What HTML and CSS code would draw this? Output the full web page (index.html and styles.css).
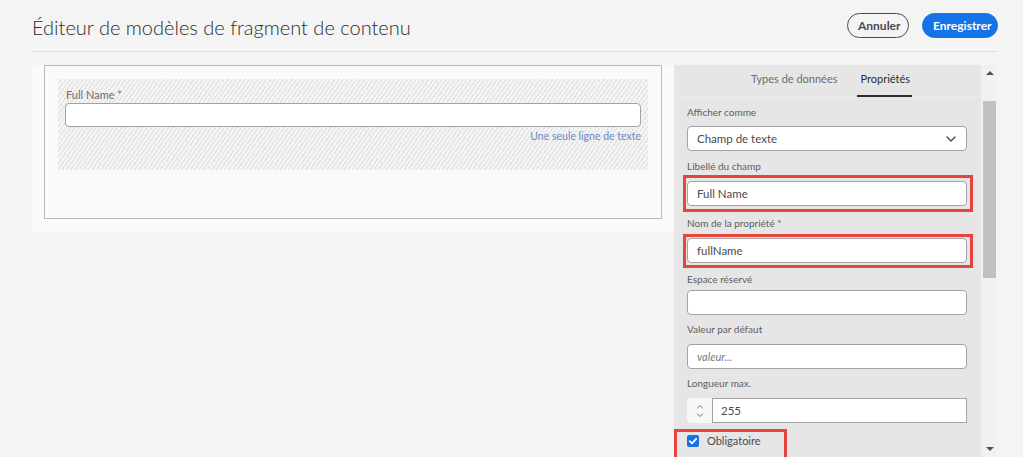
FILE: index.html
```html
<!DOCTYPE html>
<html lang="fr">
<head>
<meta charset="utf-8">
<title>Éditeur de modèles de fragment de contenu</title>
<link rel="stylesheet" href="styles.css">
</head>
<body>
<div class="page">
  <header class="top">
    <h1 class="title">Éditeur de modèles de fragment de contenu</h1>
    <div class="actions">
      <button class="btn btn-quiet">Annuler</button>
      <button class="btn btn-cta">Enregistrer</button>
    </div>
  </header>
  <main class="workspace">
    <section class="canvas">
      <div class="model-box">
        <div class="field-card">
          <div class="fc-label">Full Name *</div>
          <div class="fc-input"></div>
          <div class="fc-hint">Une seule ligne de texte</div>
        </div>
      </div>
    </section>
    <aside class="sidebar">
      <div class="side-panel">
        <nav class="tabs">
          <span class="tab">Types de données</span>
          <span class="tab tab-active">Propriétés</span>
        </nav>
        <div class="props">
          <div class="p-label first">Afficher comme</div>
          <div class="p-select">
            <span>Champ de texte</span>
            <svg class="chev" width="10" height="6" viewBox="0 0 10 6"><path d="M1 1l4 4 4-4" fill="none" stroke="#4b4b4b" stroke-width="1.4" stroke-linecap="round" stroke-linejoin="round"/></svg>
          </div>
          <div class="p-label l2">Libellé du champ</div>
          <div class="hl hl-a"><div class="p-input">Full Name</div></div>
          <div class="p-label l3">Nom de la propriété *</div>
          <div class="hl hl-b"><div class="p-input">fullName</div></div>
          <div class="p-label l4">Espace réservé</div>
          <div class="p-input i-gap-s"></div>
          <div class="p-label l5">Valeur par défaut</div>
          <div class="p-input i-gap placeholder">valeur...</div>
          <div class="p-label l5">Longueur max.</div>
          <div class="p-number i-gap">
            <div class="stepper">
              <svg width="8" height="16" viewBox="0 0 8 16"><path d="M1.5 5l2.5-2.5 2.5 2.5M1.5 11l2.5 2.5 2.5-2.5" fill="none" stroke="#6e6e6e" stroke-width="1" stroke-linecap="round" stroke-linejoin="round"/></svg>
            </div>
            <div class="num-val">255</div>
          </div>
          <div class="hl hl-c">
            <span class="checkbox"><svg width="12" height="12" viewBox="0 0 12 12"><path d="M2.8 6.2l2.2 2.2 4.2-4.6" fill="none" stroke="#fff" stroke-width="1.8" stroke-linecap="round" stroke-linejoin="round"/></svg></span>
            <span class="cb-text">Obligatoire</span>
          </div>
        </div>
      </div>
      <div class="scrollbar">
        <div class="sb-btn"><span class="tri-up"></span></div>
        <div class="sb-track"><div class="sb-thumb"></div></div>
        <div class="sb-btn"><span class="tri-down"></span></div>
      </div>
    </aside>
  </main>
</div>
</body>
</html>
```

FILE: styles.css
```css
* { box-sizing: border-box; }
html, body { margin: 0; padding: 0; }
body {
  background: #f4f4f4;
  font-family: Lato, "Open Sans", sans-serif;
  color: #4b4b4b;
  height: 457px;
  overflow: hidden;
}
.page { margin: 0 25px 0 32px; }

.top {
  height: 52px;
  display: flex;
  align-items: center;
  justify-content: space-between;
  border-bottom: 1px solid #e1e1e1;
}
.title {
  margin: 3px 0 0 0;
  font-size: 20px;
  font-weight: 300;
  color: #2c2c2c;
  letter-spacing: 0;
}
.actions { display: flex; gap: 13px; align-items: center; margin-top: -1px; }
.btn {
  font-family: Lato, "Open Sans", sans-serif;
  font-size: 12px;
  font-weight: 700;
  height: 25px;
  border-radius: 13px;
  padding: 0 10px;
  cursor: pointer;
}
.btn-quiet { background: transparent; border: 1px solid #4b4b4b; color: #4b4b4b; width: 62px; }
.btn-cta { background: #1473e6; border: 1px solid #1473e6; color: #fff; width: 76px; }

.workspace {
  display: flex;
  align-items: flex-start;
  margin-top: 13px;
}
.canvas {
  width: 642px;
  background: #fafafa;
  padding: 0 12px 13px 12px;
}
.model-box {
  border: 1px solid #bababa;
  height: 154px;
  padding: 13px;
}
.field-card {
  height: 91px;
  padding: 9px 7px 0 7px;
  background: repeating-linear-gradient(125deg, #f4f4f4 0px, #f4f4f4 2.5px, #e0e0e0 2.5px, #e0e0e0 3.5px);
}
.fc-label { font-size: 11px; line-height: 14px; color: #6e6e6e; padding-left: 1px; }
.fc-input {
  margin-top: 1px;
  height: 24px;
  background: #fff;
  border: 1px solid #a3a3a3;
  border-radius: 4px;
}
.fc-hint {
  margin-top: 2px;
  text-align: right;
  font-size: 10.5px;
  line-height: 14px;
  color: #6b87c3;
}

.sidebar {
  display: flex;
  height: 392px;
}
.side-panel {
  width: 307px;
  background: #e6e6e6;
  height: 100%;
  overflow: hidden;
}
.tabs {
  height: 32px;
  display: flex;
  justify-content: center;
  gap: 16px;
  border-bottom: 1px solid #ececec;
  padding-left: 5px;
}
.tab {
  font-size: 11px;
  line-height: 28px;
  color: #6e6e6e;
  padding: 0 3px;
  height: 32px;
  border-bottom: 2px solid transparent;
}
.tab-active { color: #2c2c2c; border-bottom-color: #2c2c2c; padding: 0 2px 0 4px; }

.props { padding: 8px 14px 0 13px; display: flex; flex-direction: column; }
.p-label { font-size: 10px; line-height: 14px; color: #5e5e5e; padding-left: 0; }
.p-label.l2 { margin-top: 8px; }
.p-label.l3 { margin-top: 4px; }
.p-label.l4 { margin-top: 4px; }
.p-label.l5 { margin-top: 7px; }

.p-select, .p-input {
  height: 25px;
  background: #fff;
  border: 1px solid #a3a3a3;
  border-radius: 4px;
  font-size: 11.5px;
  line-height: 23px;
  color: #4b4b4b;
  padding: 0 9px;
}
.p-select { margin-top: 7px; display: flex; justify-content: space-between; align-items: center; }
.chev { margin-right: 1px; }
.i-gap-s { margin-top: 4px; }
.i-gap { margin-top: 8px; }
.placeholder { font-style: italic; color: #7a7a7a; font-size: 11px; }

.hl {
  border: 3px solid #e5453d;
  margin-left: -4px;
  margin-right: -6px;
  padding: 3px 3px 3px 1px;
}
.hl-a { margin-top: 2px; }
.hl-b { margin-top: 4px; padding-top: 1px; padding-bottom: 2px; }
.hl-c {
  margin-top: 6px;
  margin-left: -13px;
  width: 113px;
  height: 34px;
  padding: 3px 0 0 10px;
  display: flex;
  align-items: flex-start;
  gap: 8px;
}

.p-number { display: flex; height: 25px; }
.stepper {
  width: 25px;
  background: #f8f8f8;
  border-radius: 4px 0 0 4px;
  display: flex;
  align-items: center;
  justify-content: center;
}
.num-val {
  flex: 1;
  background: #fff;
  border: 1px solid #a3a3a3;
  font-size: 11.5px;
  line-height: 23px;
  padding: 0 8px;
  color: #4b4b4b;
}
.checkbox {
  width: 12px;
  height: 12px;
  background: #1473e6;
  border-radius: 2px;
  display: flex;
  margin-top: 0;
}
.cb-text { font-size: 11px; line-height: 12px; color: #4b4b4b; }

.scrollbar {
  width: 15px;
  height: 100%;
  background: #f1f1f1;
  display: flex;
  flex-direction: column;
}
.sb-btn {
  height: 16px;
  display: flex;
  align-items: center;
  justify-content: center;
  padding-left: 2px;
}
.sb-track { flex: 1; padding-top: 20px; padding-left: 2px; }
.sb-thumb { width: 13px; height: 177px; background: #c1c1c1; }
.tri-up {
  width: 0; height: 0;
  border-left: 4px solid transparent;
  border-right: 4px solid transparent;
  border-bottom: 4px solid #505050;
}
.tri-down {
  width: 0; height: 0;
  border-left: 4px solid transparent;
  border-right: 4px solid transparent;
  border-top: 4px solid #505050;
}
```
